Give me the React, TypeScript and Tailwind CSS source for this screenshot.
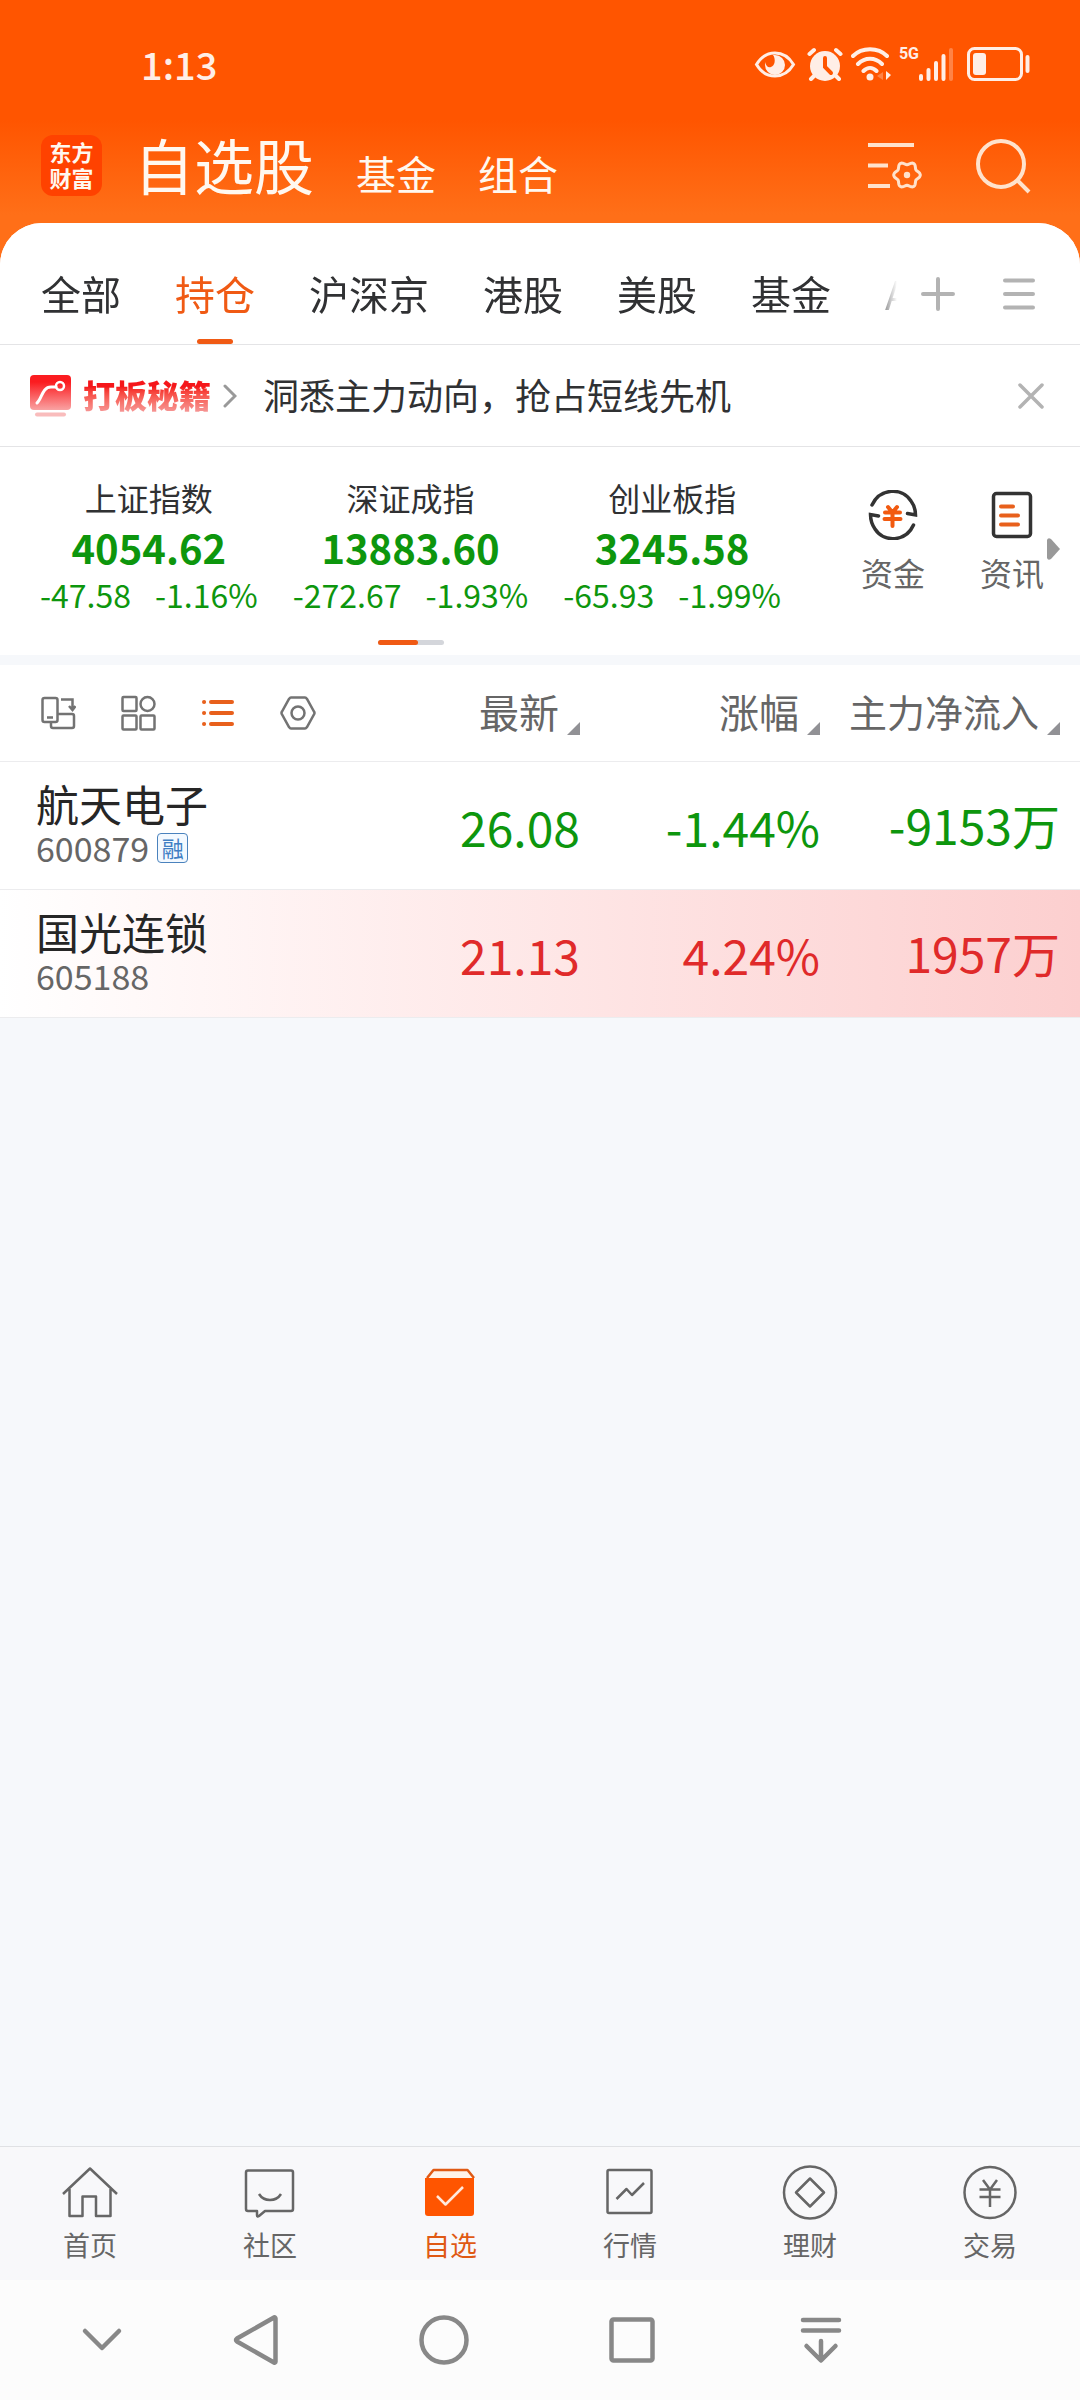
import type { ReactNode } from 'react';
import clsx from 'clsx';

interface IndexQuote {
  name: string;
  value: string;
  change: string;
  percent: string;
}

interface Stock {
  name: string;
  code: string;
  margin?: boolean;
  price: string;
  percent: string;
  inflow: string;
  up: boolean;
}

const tabs = ['全部', '持仓', '沪深京', '港股', '美股', '基金', 'A股'];

const indexes: IndexQuote[] = [
  { name: '上证指数', value: '4054.62', change: '-47.58', percent: '-1.16%' },
  { name: '深证成指', value: '13883.60', change: '-272.67', percent: '-1.93%' },
  { name: '创业板指', value: '3245.58', change: '-65.93', percent: '-1.99%' },
];

const stocks: Stock[] = [
  { name: '航天电子', code: '600879', margin: true, price: '26.08', percent: '-1.44%', inflow: '-9153万', up: false },
  { name: '国光连锁', code: '605188', price: '21.13', percent: '4.24%', inflow: '1957万', up: true },
];

// six-lobed cog outline
const gearPoints = Array.from({ length: 72 }, (_, i) => {
  const a = (i / 72) * Math.PI * 2;
  const r = 11.8 + 1.5 * Math.cos(6 * a);
  return `${(39 + r * Math.cos(a)).toFixed(1)},${(33 + r * Math.sin(a)).toFixed(1)}`;
}).join(' ');

function StatusBar() {
  return (
    <div className="flex h-32 items-center justify-between pl-[141px] pr-[49px] text-[#ffeee6]">
      <span className="text-[38px] leading-none font-medium">1:13</span>
      <div className="flex items-center">
        <svg className="h-[34px] w-[42px]" viewBox="0 0 42 34" fill="none">
          <path d="M2.500 17.500C7 10 13 6 21 6s14 4 18.500 11.500C35 25 29 29 21 29S7 25 2.500 17.500Z" stroke="currentColor" strokeWidth="3" />
          <path d="M21 8a10 10 0 1 1-10 10v-3c1 4 3 6 6 5 4-1 5-8 2-12Z" fill="currentColor" />
        </svg>
        <svg className="ml-[11px] h-[34px] w-9" viewBox="0 0 36 34" fill="none">
          <circle cx="18" cy="19" r="15" fill="currentColor" />
          <path d="M2.500 7 7 3M33.500 7 29 3M8 28l-4 4M28 28l4 4" stroke="currentColor" strokeWidth="4" strokeLinecap="round" />
          <path d="M18 11v9l6 6" stroke="#ff5500" strokeWidth="4" strokeLinecap="round" />
        </svg>
        <svg className="ml-2 h-[34px] w-10" viewBox="0 0 40 34" fill="none">
          <path d="M2 9c9-9 25-9 34 0M7 17c7-7 17-7 24 0M12.500 24c4-4 9-4 13 0" stroke="currentColor" strokeWidth="4" strokeLinecap="round" />
          <circle cx="19" cy="30" r="3.500" fill="currentColor" />
          <path d="M32 25v8l-6-4Z" fill="currentColor" opacity=".3" />
          <path d="M35 24v9l5-5Z" fill="currentColor" />
        </svg>
        <span className="ml-2 mb-5 font-['Roboto'] text-[16px] leading-none font-bold">5G</span>
        <svg className="h-[34px] w-9" viewBox="0 0 36 34" stroke="currentColor" strokeWidth="4" strokeLinecap="round">
          <path d="M2 29v3M9.500 23v9M17 16v16M24.500 9v23" />
          <path d="M32 3v29" opacity=".3" />
        </svg>
        <svg className="ml-3 h-[34px] w-16" viewBox="0 0 64 34" fill="none">
          <rect x="1.500" y="1.500" width="53" height="31" rx="6" stroke="currentColor" strokeWidth="3" />
          <rect x="6" y="6" width="13" height="22" rx="3" fill="currentColor" />
          <path d="M60.500 10v14" stroke="currentColor" strokeWidth="4" strokeLinecap="round" />
        </svg>
      </div>
    </div>
  );
}

function AppHeader() {
  return (
    <header className="flex h-[95px] items-center pb-5 pl-[41px] pr-[48px] text-[#fff8f0]">
      <div className="flex h-[61px] w-[61px] shrink-0 flex-col items-center justify-center rounded-xl bg-[#ff4200] pb-1 text-[22px] leading-[26px] font-bold">
        <span>东方</span>
        <span>财富</span>
      </div>
      <div className="ml-8 flex items-baseline pb-1">
        <h1 className="text-[60px] leading-[72px]">自选股</h1>
        <button className="ml-[42px] text-[40px] leading-[48px]">基金</button>
        <button className="ml-[42px] text-[40px] leading-[48px]">组合</button>
      </div>
      <button className="ml-auto text-[#ffe2cc]" aria-label="列表设置">
        <svg className="h-12 w-[54px]" viewBox="0 0 54 48" fill="none" stroke="currentColor">
          <path d="M0 3h46M0 23.500h20M0 44h22" strokeWidth="4" />
          <polygon points={gearPoints} strokeWidth="3" strokeLinejoin="round" />
          <circle cx="39" cy="33" r="3.200" fill="currentColor" stroke="none" />
        </svg>
      </button>
      <button className="ml-[54px] text-[#ffe2cc]" aria-label="搜索">
        <svg className="h-14 w-14" viewBox="0 0 56 56" fill="none" stroke="currentColor" strokeWidth="4">
          <circle cx="25" cy="26" r="23" />
          <path d="m41 42 12 12" />
        </svg>
      </button>
    </header>
  );
}

function TabBar() {
  return (
    <div className="flex h-[122px] border-b border-[#e4e4e6]">
      <nav className="flex min-w-0 flex-1 gap-[54px] overflow-hidden pl-[41px] [mask-image:linear-gradient(to_right,#000_calc(100%-24px),transparent)]">
        {tabs.map((tab) => {
          const active = tab === '持仓';
          return (
            <button
              key={tab}
              className={clsx('relative shrink-0 pt-[18px] text-[40px] leading-[48px]', active ? 'text-[#f05a14]' : 'text-[#303133]')}
            >
              {tab}
              {active && <span className="absolute bottom-0 left-1/2 h-[5px] w-9 -translate-x-1/2 rounded-sm bg-[#f05a14]" />}
            </button>
          );
        })}
      </nav>
      <div className="flex shrink-0 items-center gap-12 pl-6 pr-[45px] pt-5 text-[#b3b3b3]">
        <button aria-label="添加分组">
          <svg className="h-[34px] w-[34px]" viewBox="0 0 34 34" stroke="currentColor" strokeWidth="4" strokeLinecap="round">
            <path d="M17 2v30M2 17h30" />
          </svg>
        </button>
        <button aria-label="管理分组">
          <svg className="h-8 w-8" viewBox="0 0 32 32" stroke="currentColor" strokeWidth="4" strokeLinecap="round">
            <path d="M2 2.500h28M2 16h28M2 29.500h28" />
          </svg>
        </button>
      </div>
    </div>
  );
}

function Banner() {
  return (
    <div className="flex h-[102px] items-center border-b border-[#e4e4e6] pl-[30px] pr-9">
      <svg className="h-[42px] w-[41px] shrink-0" viewBox="0 0 41 42" fill="none">
        <defs>
          <linearGradient id="promo" x1="0" y1="0" x2="0" y2="1">
            <stop offset=".2" stopColor="#fb1c20" />
            <stop offset="1" stopColor="#f9a3a3" />
          </linearGradient>
        </defs>
        <rect width="41" height="35" rx="4" fill="url(#promo)" />
        <path d="M7 28c5-4 5-16 14-16h5" stroke="#fff" strokeWidth="3" strokeLinecap="round" />
        <circle cx="30" cy="11" r="4" stroke="#fff" strokeWidth="2.500" />
        <path d="M7 39.500h27" stroke="#f9bcbc" strokeWidth="4" strokeLinecap="round" />
      </svg>
      <span className="mb-1 ml-3 bg-linear-to-b from-[#f5161a] from-35% to-[#f59a9a] to-90% bg-clip-text text-[32px] leading-[48px] font-black text-transparent">
        打板秘籍
      </span>
      <svg className="ml-3 h-6 w-[14px]" viewBox="0 0 14 24" fill="none" stroke="#999" strokeWidth="3" strokeLinecap="round">
        <path d="m2 2 10 10L2 22" />
      </svg>
      <p className="mb-1 ml-[26px] text-[36px] leading-[48px] text-[#303133]">洞悉主力动向，抢占短线先机</p>
      <button className="ml-auto" aria-label="关闭">
        <svg className="h-[26px] w-[26px]" viewBox="0 0 26 26" stroke="#b3b3b3" strokeWidth="3.500" strokeLinecap="round">
          <path d="m2 2 22 22M24 2 2 24" />
        </svg>
      </button>
    </div>
  );
}

function IndexPanel() {
  return (
    <section className="relative flex h-[208px] pl-[18px] pr-[9px]">
      <div className="flex-1 pt-[26px]">
        <div className="grid grid-cols-3 text-center text-[#0d960d]">
          {indexes.map((item) => (
            <div key={item.name}>
              <div className="text-[32px] leading-[48px] text-[#303133]">{item.name}</div>
              <div className="text-[40px] leading-[52px] font-semibold">{item.value}</div>
              <div className="flex justify-center gap-6 text-[32px] leading-[43px]">
                <span>{item.change}</span>
                <span>{item.percent}</span>
              </div>
            </div>
          ))}
        </div>
        <div className="mx-auto mt-6 h-[5px] w-[66px] rounded-full bg-[#d4d6db]">
          <div className="h-full w-10 rounded-full bg-[#f05a14]" />
        </div>
      </div>
      <div className="ml-[30px] flex items-start pt-[43px] text-[32px] leading-[48px] text-[#666]">
        <button className="flex w-[120px] flex-col items-center gap-2">
          <svg className="h-[50px] w-[50px]" viewBox="0 0 50 50" fill="none" strokeWidth="3.500" strokeLinecap="round">
            <path d="M4 15C12-2 34-3 43 11c3 4 4.500 9 4.500 14l-8-1.500M45.500 35C38 52 16 53 7 39c-3.500-5-4.500-9-4.500-14.500l8 1.500" stroke="#333" />
            <path d="m20 17 4.500 5.500L29 17M17 22.500h15M16.500 29h16M24.500 22.500V36" stroke="#f25a10" strokeWidth="4" />
          </svg>
          资金
        </button>
        <button className="flex w-[118px] flex-col items-center gap-2">
          <svg className="h-[50px] w-[50px]" viewBox="0 0 50 50" fill="none" strokeWidth="3.500" strokeLinecap="round">
            <rect x="6.500" y="3.500" width="37" height="43" rx="3" stroke="#333" />
            <path d="M14 16.500h12M14 25.500h17M14 34.500h17" stroke="#e8601c" strokeWidth="4" />
          </svg>
          资讯
        </button>
      </div>
      <svg className="absolute right-5 top-[90px] h-6 w-[13px]" viewBox="0 0 13 24" fill="#999">
        <path d="M0 3q1-3 4-1l9 10-9 10q-3 2-4-1Z" />
      </svg>
    </section>
  );
}

function ToolButton({ label, active, children }: { label: string; active?: boolean; children: ReactNode }) {
  return (
    <button aria-label={label} className={active ? 'text-[#e8601c]' : 'text-[#737373]'}>
      <svg className="h-9 w-9" viewBox="0 0 36 36" fill="none" stroke="currentColor" strokeWidth="2.500">
        {children}
      </svg>
    </button>
  );
}

function SortHeader({ label, small }: { label: string; small?: boolean }) {
  return (
    <button className={clsx('inline-flex items-end gap-2 pb-1 leading-[48px] whitespace-nowrap', small ? 'text-[38px]' : 'text-[40px]')}>
      {label}
      <svg className="h-[13px] w-[13px]" viewBox="0 0 13 13" fill="#919195">
        <path d="M13 0v13H0Z" />
      </svg>
    </button>
  );
}

function StockTable() {
  return (
    <table className="w-full table-fixed border-separate border-spacing-0 border-t-[10px] border-[#f6f8fb] bg-white">
      <thead>
        <tr className="h-[97px] text-right text-[#666] *:border-b *:border-[#ececee] *:p-0 *:font-normal">
          <th>
            <div className="flex gap-11 pl-10">
              <ToolButton label="横屏">
                <rect x="2.500" y="3" width="15" height="24" rx="2" />
                <path d="M7 22.500h6M11 28v3q0 2 2 2h19q2 0 2-2V21q0-2-2-2H18M21 4.500h11.500V14M29 11l3.500 4 3-4" />
              </ToolButton>
              <ToolButton label="宫格">
                <rect x="2.500" y="2" width="14" height="14" rx="1" />
                <circle cx="27.500" cy="9" r="7" />
                <rect x="2.500" y="20.500" width="14" height="14" rx="1" />
                <rect x="20.500" y="20.500" width="14" height="14" rx="1" />
              </ToolButton>
              <ToolButton label="列表" active>
                <path d="M4 7h.1M4 18h.1M4 29h.1M11 7h21M11 18h21M11 29h21" strokeWidth="4" strokeLinecap="round" />
              </ToolButton>
              <ToolButton label="设置">
                <path d="M11 2.500h14q1 0 2 1.500l7 12.500q1 1.500 0 3L27 32q-1 1.500-2 1.500H11q-1 0-2-1.500L2 19.500q-1-1.500 0-3L9 4q1-1.500 2-1.500Z" />
                <circle cx="18" cy="18" r="6.500" />
              </ToolButton>
            </div>
          </th>
          <th className="w-[240px]"><SortHeader label="最新" /></th>
          <th className="w-[240px]"><SortHeader label="涨幅" /></th>
          <th className="w-[260px]"><div className="pr-5"><SortHeader label="主力净流入" small /></div></th>
        </tr>
      </thead>
      <tbody>
        {stocks.map((stock) => (
          <tr
            key={stock.code}
            className={clsx(
              'h-32 text-right text-[48px] leading-[56px] *:border-b *:border-[#ececee] *:p-0',
              stock.up ? 'bg-linear-to-r from-white to-[#fccfcf] text-[#e02a2a]' : 'text-[#0d960d]'
            )}
          >
            <td>
              <div className="pb-[2px] pl-9 text-left">
                <div className="text-[43px] leading-[46px] text-[#262626]">{stock.name}</div>
                <div className="flex items-center gap-2 text-[34px] leading-[44px] text-[#666]">
                  {stock.code}
                  {stock.margin && (
                    <span className="flex h-[30px] w-[31px] items-center justify-center rounded-sm border border-[#4a82bd] bg-[#f3f9ff] pb-[2px] text-[22px] leading-none text-[#3f7fc4]">
                      融
                    </span>
                  )}
                </div>
              </div>
            </td>
            <td>{stock.price}</td>
            <td>{stock.percent}</td>
            <td><div className="pb-1 pr-5">{stock.inflow}</div></td>
          </tr>
        ))}
      </tbody>
    </table>
  );
}

const navItems: { label: string; icon: ReactNode }[] = [
  {
    label: '首页',
    icon: <path d="M1 29 28 3.500 55 29M7.500 24v27h13V31.500H34V51h14.500V24" />,
  },
  {
    label: '社区',
    icon: <path d="M6 5.500h43q2 0 2 2V44q0 2-2 2H23l-6 5q-2 1.500-2-1v-4H6q-2 0-2-2V7.500q0-2 2-2ZM17 29c5 8 17 8 22 0" />,
  },
  {
    label: '自选',
    icon: (
      <>
        <path d="M5 13 11.500 5h34L52 13" fill="#fff3ea" />
        <path d="M3 13h49v35q0 3-3 3H6q-3 0-3-3Z" fill="#ff5500" stroke="none" />
        <path d="m15 31 8.500 8.500L41 22" stroke="#ffe9dc" />
      </>
    ),
  },
  {
    label: '行情',
    icon: (
      <>
        <rect x="5.500" y="5" width="44" height="43" rx="1.500" />
        <path d="m14.500 34 10-10 5.500 6 12-12" strokeWidth="2.500" />
      </>
    ),
  },
  {
    label: '理财',
    icon: (
      <>
        <circle cx="28" cy="27.500" r="26" />
        <path d="m28 13.500 14 14-14 14-14-14Z" strokeWidth="2.500" />
      </>
    ),
  },
  {
    label: '交易',
    icon: (
      <>
        <circle cx="28" cy="27.500" r="25.500" />
        <path d="m21 15 7 9.500 7-9.500M17.500 24.500h21M17.500 32h21M28 24.500V42" strokeWidth="2.500" />
      </>
    ),
  },
];

function BottomNav() {
  return (
    <nav className="grid grid-cols-6 border-t border-[#e0e1e4] bg-[#f8f8fa] pb-[15px] pt-[18px]">
      {navItems.map(({ label, icon }) => (
        <button
          key={label}
          className={clsx(
            'flex flex-col items-center gap-1 text-[27px] leading-[40px]',
            label === '自选' ? 'text-[#e05a14]' : 'text-[#666]'
          )}
        >
          <svg className="h-14 w-14" viewBox="0 0 56 56" fill="none" stroke="currentColor" strokeWidth="2.500" strokeLinejoin="round">
            {icon}
          </svg>
          {label}
        </button>
      ))}
    </nav>
  );
}

function SystemBar() {
  const icon = 'h-[52px] w-[52px]';
  return (
    <div className="grid h-[120px] grid-cols-[162fr_188fr_188fr_188fr_354fr] items-center bg-[#fcfcfc] text-[#888]">
      <button className="flex justify-end pr-[34px]" aria-label="收起">
        <svg className={icon} viewBox="0 0 52 52" fill="none" stroke="currentColor" strokeWidth="4.500" strokeLinecap="round" strokeLinejoin="round">
          <path d="m9 17 17 17 17-17" />
        </svg>
      </button>
      <button className="flex justify-center" aria-label="返回">
        <svg className={icon} viewBox="0 0 52 52" fill="none" stroke="currentColor" strokeWidth="4.500" strokeLinejoin="round">
          <path d="M44 3.500q1.500-.5 1.500 1v43q0 1.500-1.500 1L7 27.500q-2-1.500 0-3Z" />
        </svg>
      </button>
      <button className="flex justify-center" aria-label="主页">
        <svg className={icon} viewBox="0 0 52 52" fill="none" stroke="currentColor" strokeWidth="4.500">
          <circle cx="26" cy="26" r="22.500" />
        </svg>
      </button>
      <button className="flex justify-center" aria-label="最近任务">
        <svg className={icon} viewBox="0 0 52 52" fill="none" stroke="currentColor" strokeWidth="4.500">
          <rect x="5.500" y="5.500" width="41" height="41" rx="2" />
        </svg>
      </button>
      <button className="flex pl-[69px]" aria-label="通知栏">
        <svg className={icon} viewBox="0 0 52 52" fill="none" stroke="currentColor" strokeWidth="4.500" strokeLinecap="round" strokeLinejoin="round">
          <path d="M8 6h36M8 16.500h36M26 27v19M11.500 32 26 46.500 40.500 32" />
        </svg>
      </button>
    </div>
  );
}

export default function App() {
  return (
    <div className="flex min-h-screen flex-col bg-[linear-gradient(to_bottom,#ff5500_120px,#ff6f18_215px)] font-['Noto_Sans_CJK_SC',sans-serif]">
      <StatusBar />
      <AppHeader />
      <main className="flex flex-1 flex-col overflow-hidden rounded-t-[42px] bg-[#f6f8fb]">
        <div className="bg-white">
          <TabBar />
          <Banner />
          <IndexPanel />
        </div>
        <StockTable />
      </main>
      <BottomNav />
      <SystemBar />
    </div>
  );
}
